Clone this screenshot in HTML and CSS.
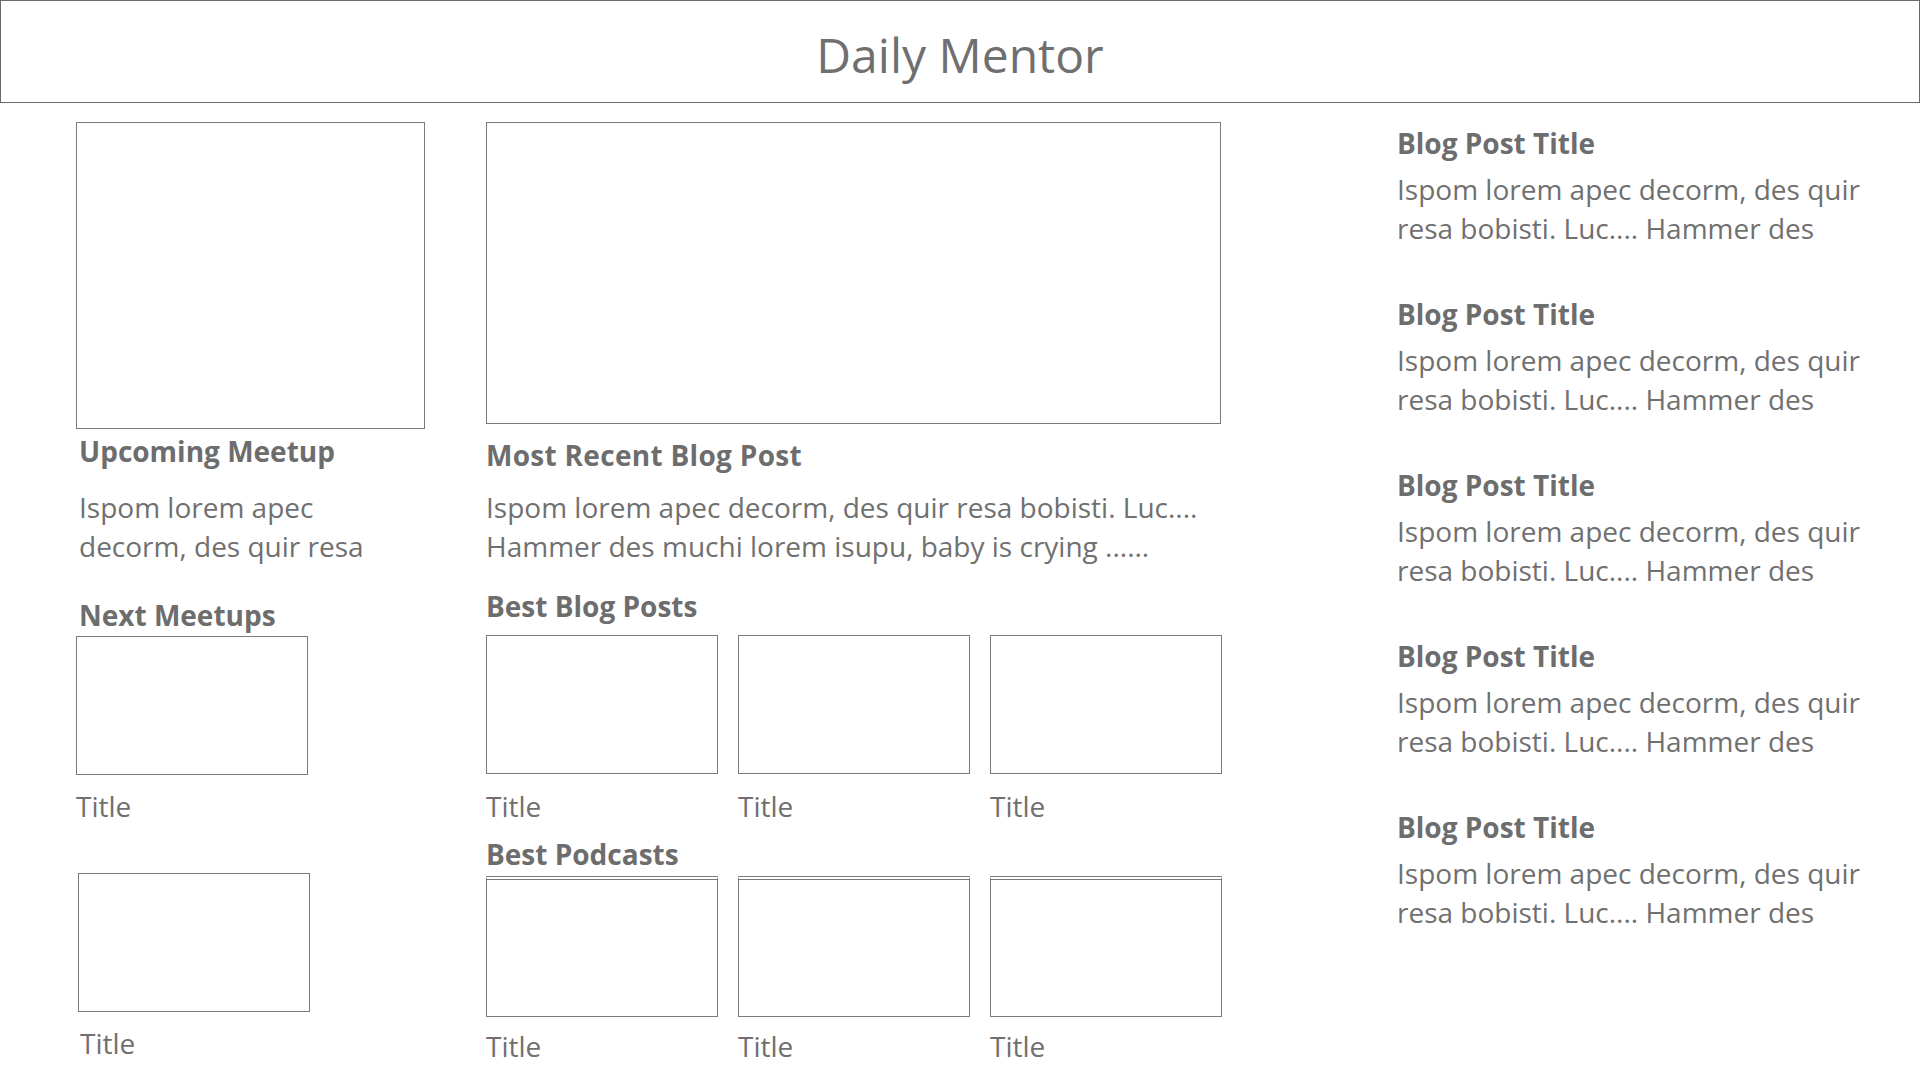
FILE: index.html
```html
<!DOCTYPE html>
<html lang="en">
<head>
<meta charset="utf-8">
<title>Daily Mentor</title>
<link rel="stylesheet" href="styles.css">
</head>
<body>
<header class="masthead">
  <h1 class="brand">Daily Mentor</h1>
</header>
<main class="layout">
  <section class="col col-left">
    <div class="box box-hero-left"></div>
    <h2 class="heading heading-upcoming">Upcoming Meetup</h2>
    <p class="body-text body-upcoming">Ispom lorem apec<br>decorm, des quir resa</p>
    <h2 class="heading heading-next">Next Meetups</h2>
    <div class="card">
      <div class="box box-small"></div>
      <div class="card-title">Title</div>
    </div>
    <div class="card card-second">
      <div class="box box-small"></div>
      <div class="card-title">Title</div>
    </div>
  </section>

  <section class="col col-mid">
    <div class="box box-hero-mid"></div>
    <h2 class="heading heading-recent">Most Recent Blog Post</h2>
    <p class="body-text body-recent">Ispom lorem apec decorm, des quir resa bobisti. Luc....<br>Hammer des muchi lorem isupu, baby is crying ......</p>
    <h2 class="heading heading-best">Best Blog Posts</h2>
    <div class="tiles">
      <div class="card"><div class="box box-small"></div><div class="card-title">Title</div></div>
      <div class="card"><div class="box box-small"></div><div class="card-title">Title</div></div>
      <div class="card"><div class="box box-small"></div><div class="card-title">Title</div></div>
    </div>
    <h2 class="heading heading-podcasts">Best Podcasts</h2>
    <div class="tiles tiles-podcasts">
      <div class="card"><div class="box box-small box-double"></div><div class="card-title">Title</div></div>
      <div class="card"><div class="box box-small box-double"></div><div class="card-title">Title</div></div>
      <div class="card"><div class="box box-small box-double"></div><div class="card-title">Title</div></div>
    </div>
  </section>

  <section class="col col-right">
    <article class="post">
      <h3 class="heading">Blog Post Title</h3>
      <p class="body-text">Ispom lorem apec decorm, des quir<br>resa bobisti. Luc.... Hammer des</p>
    </article>
    <article class="post">
      <h3 class="heading">Blog Post Title</h3>
      <p class="body-text">Ispom lorem apec decorm, des quir<br>resa bobisti. Luc.... Hammer des</p>
    </article>
    <article class="post">
      <h3 class="heading">Blog Post Title</h3>
      <p class="body-text">Ispom lorem apec decorm, des quir<br>resa bobisti. Luc.... Hammer des</p>
    </article>
    <article class="post">
      <h3 class="heading">Blog Post Title</h3>
      <p class="body-text">Ispom lorem apec decorm, des quir<br>resa bobisti. Luc.... Hammer des</p>
    </article>
    <article class="post">
      <h3 class="heading">Blog Post Title</h3>
      <p class="body-text">Ispom lorem apec decorm, des quir<br>resa bobisti. Luc.... Hammer des</p>
    </article>
  </section>
</main>
</body>
</html>
```
FILE: styles.css
```css
* { box-sizing: border-box; }

html, body {
  margin: 0;
  padding: 0;
  background: #ffffff;
}

body {
  font-family: "Open Sans", "Noto Sans", "Liberation Sans", sans-serif;
  color: #6f6f6f;
  width: 1920px;
  height: 1080px;
  overflow: hidden;
}

.masthead {
  height: 103px;
  border: 1px solid #6a6a6a;
  display: flex;
  align-items: center;
  justify-content: center;
}

.brand {
  margin: 0;
  font-size: 48px;
  font-weight: 400;
  line-height: 60px;
  color: #6f6f6f;
  padding-top: 6px;
}

.layout {
  display: grid;
  grid-template-columns: 349px 735px 1fr;
  column-gap: 61px;
  padding: 19px 0 0 76px;
}

.col-right {
  margin-left: 115px;
  padding-top: 2px;
  white-space: nowrap;
}

.box {
  border: 1px solid #7a7a7a;
  background: #fff;
}

.box-hero-left { height: 307px; }
.box-hero-mid { height: 302px; }

.heading {
  margin: 0;
  font-size: 28px;
  font-weight: 700;
  line-height: 38px;
  color: #6d6d6d;
  white-space: nowrap;
}

.body-text {
  margin: 0;
  font-size: 28px;
  font-weight: 400;
  line-height: 39px;
  color: #707070;
  white-space: nowrap;
}

.heading-upcoming { margin: 3px 0 0 3px; }
.body-upcoming { margin: 18px 0 0 3px; }
.heading-next { margin: 30px 0 0 3px; }

.card { display: flex; flex-direction: column; }
.box-small { height: 139px; }
.col-left .box-small { width: 232px; }

.card-title {
  font-size: 28px;
  line-height: 38px;
  margin-top: 13px;
  color: #707070;
}

.col-left .card { margin-top: 2px; }
.col-left .card .card-title { margin-top: 12px; }
.col-left .card-second { margin-top: 48px; margin-left: 2px; }
.col-left .card-second .card-title { margin-top: 12px; margin-left: 2px; }

.heading-recent { margin-top: 12px; letter-spacing: 0.3px; }
.body-recent { margin-top: 14px; }
.heading-best { margin-top: 21px; }

.tiles {
  display: grid;
  grid-template-columns: repeat(3, 232px);
  column-gap: 20px;
  margin-top: 10px;
}

.heading-podcasts { margin-top: 10px; }
.tiles-podcasts { margin-top: 3px; }
.tiles-podcasts .card-title { margin-top: 10px; }

.box-double {
  height: 141px;
  border-top: 4px double #7a7a7a;
}

.post { margin-bottom: 47px; }
.post .body-text { margin-top: 8px; }
```
